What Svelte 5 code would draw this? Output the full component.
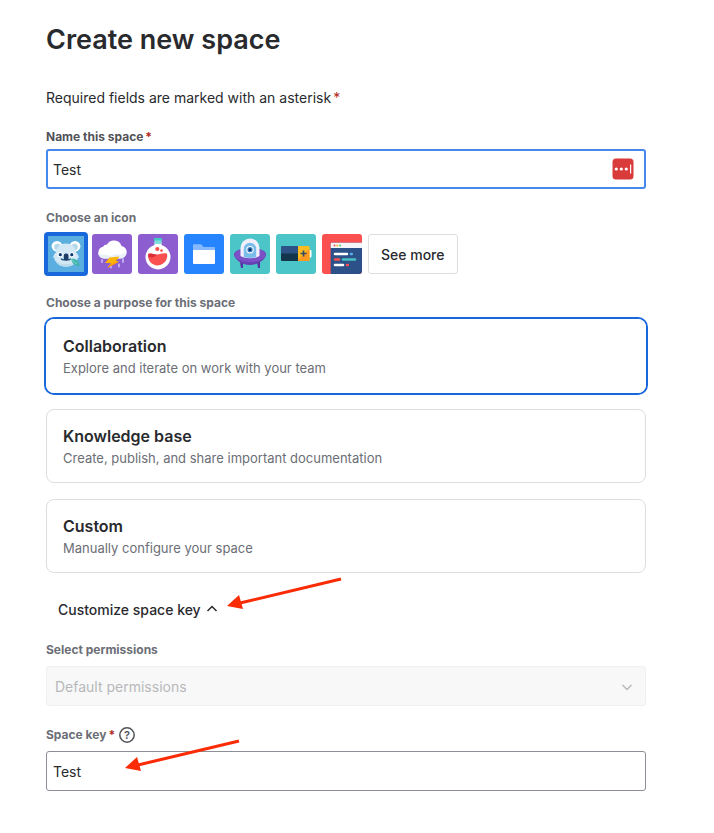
<script>
    const purposes = [
        { id: "collaboration", title: "Collaboration", text: "Explore and iterate on work with your team" },
        { id: "knowledge", title: "Knowledge base", text: "Create, publish, and share important documentation" },
        { id: "custom", title: "Custom", text: "Manually configure your space" },
    ];
    const icons = ["koala", "storm", "flask", "folder", "ufo", "battery", "code"];

    let name = $state("Test");
    let key = $state("Test");
    let icon = $state("koala");
    let purpose = $state("collaboration");
    let open = $state(true);
</script>

{#snippet arrow()}
    <svg class="arrow" width="120" height="36" viewBox="0 0 120 36" aria-hidden="true">
        <path d="M14 26 L115 2" stroke="#fa2b05" stroke-width="3" />
        <path d="M1 29 L13 18 L17 32 Z" fill="#fa2b05" />
    </svg>
{/snippet}

<main>
    <h1>Create new space</h1>
    <p class="hint">Required fields are marked with an asterisk<span class="star">*</span></p>

    <form onsubmit={(e) => e.preventDefault()}>
        <label class="title dark" for="name">Name this space<span class="star">*</span></label>
        <div class="control">
            <input id="name" class="text active" type="text" bind:value={name} />
            <button class="manager" type="button" aria-label="Fill in">
                <svg width="22" height="22" viewBox="0 0 22 22">
                    <rect x="0.5" y="0.5" width="21" height="21" rx="3.5" fill="#d93a3a" />
                    <circle cx="4.3" cy="11" r="1.6" fill="#fff" />
                    <circle cx="9.3" cy="11" r="1.6" fill="#fff" />
                    <circle cx="14.3" cy="11" r="1.6" fill="#fff" />
                    <rect x="18" y="6.5" width="1.2" height="9" fill="#fff" />
                </svg>
            </button>
        </div>

        <div class="title">Choose an icon</div>
        <div class="icons">
            {#each icons as item}
                <button
                    type="button"
                    class="icon"
                    class:selected={icon === item}
                    aria-label={item}
                    aria-pressed={icon === item}
                    onclick={() => (icon = item)}
                >
                    <svg viewBox="0 0 40 40" width="40" height="40">
                        {#if item === "koala"}
                            <rect width="40" height="40" fill="#5aaee0" />
                            <circle cx="11" cy="12.3" r="5.4" fill="#fff" />
                            <circle cx="29" cy="12.3" r="5.4" fill="#fff" />
                            <circle cx="11.5" cy="13" r="3.3" fill="#b3d8ea" />
                            <circle cx="28.5" cy="13" r="3.3" fill="#b3d8ea" />
                            <path d="M20 9.5c7 0 9.5 4 10 9 2 1.5 2.5 3.5 3 5-1 .3-1.5.5-1.5 1 .2 1-.3 2-1 2.5C28 31 25 32.5 20 32.5S12 31 9.5 27c-.7-.5-1.2-1.5-1-2.5 0-.5-.5-.7-1.5-1 .5-1.5 1-3.5 3-5 .5-5 3-9 10-9z" fill="#d2e9f5" />
                            <path d="M10 26c3 4 6 4 10 4s7 0 10-4c-1 5-5 6.5-10 6.5S11 31 10 26z" fill="#bddded" />
                            <circle cx="14" cy="20.5" r="2.6" fill="#fff" />
                            <circle cx="26" cy="20.5" r="2.6" fill="#fff" />
                            <circle cx="14.3" cy="20.7" r="1.6" fill="#0b3a75" />
                            <circle cx="25.8" cy="20.7" r="1.6" fill="#0b3a75" />
                            <path d="M15 24.8c1.5 1.4 3.5 1.3 5 .8 1.5.5 3.5.6 5-.8" fill="none" stroke="#1a4775" stroke-width="1.2" />
                            <rect x="17.8" y="19.5" width="4.7" height="7" rx="2" fill="#1d3c66" />
                            <path d="M25 25c4-1 8 1 8.5 7-4 0-7.5-2.5-8.5-7z" fill="#3fb5ab" />
                            <path d="M24 24.5l7 5.5" stroke="#7bd4c6" />
                        {:else if item === "storm"}
                            <rect width="40" height="40" fill="#8d5ecf" />
                            <path d="M12 24.5a6 6 0 0 1-1-11.8 5 5 0 0 1 4-2.2A8 8 0 0 1 29.5 12 6.3 6.3 0 0 1 28.5 24.5z" fill="#fff" />
                            <path d="M12 24.5A6 6 0 0 1 6 18c2 3 5 3 8 2.5 3 2 7 1.5 9-.5 4 1.5 8 .5 11-2a6.3 6.3 0 0 1-5.5 6.5z" fill="#e8f1f7" />
                            <path d="M17.5 23.5l10-1-3.5 4.5 3 .5-11.5 6.500 3.500-5h-6z" fill="#ffb400" />
                            <path d="M26 27.500l1 .2-11.500 6.300 2-3z" fill="#ff9215" />
                            <g stroke="#c7b6f1" stroke-width="1.8" stroke-linecap="round">
                                <path d="M10 26v2M31 25v3M27 30.500v2M19 33v.6" />
                            </g>
                        {:else if item === "flask"}
                            <rect width="40" height="40" fill="#8d5ecf" />
                            <path d="M16.500 8h7v3a12.500 12.500 0 1 1-7 0z" fill="#fff" />
                            <path d="M30 20a10.500 10.500 0 0 1-20 5l5 4z" fill="#e3e7f1" />
                            <path d="M10.300 20c3-1.500 6 1 9 .5 3-.3 5-2 9.500-1A9.500 9.500 0 1 1 10.300 20z" fill="#fa5050" />
                            <path d="M10.300 20c3-1.500 5.500.3 8.500.8-2 2.500-6 3.500-8.500 1.700z" fill="#d92f3a" />
                            <circle cx="19.3" cy="15" r="2.1" fill="#fa5050" />
                            <circle cx="23.5" cy="16.6" r="1.3" fill="#fa5050" />
                            <rect x="16" y="4" width="8" height="3" rx="0.8" fill="#44cac4" />
                            <rect x="16.5" y="6.5" width="7" height="3.5" fill="#7ededc" />
                        {:else if item === "folder"}
                            <rect width="40" height="40" fill="#2684ff" />
                            <path d="M9 11.200q0-1 1-1h6.500q1 0 1.500 1l1.500 1.800h10.500q1 0 1 1V18H9z" fill="#85b8ff" />
                            <path d="M9 16h22v13q0 1-1 1H10q-1 0-1-1z" fill="#fff" />
                        {:else if item === "ufo"}
                            <rect width="40" height="40" fill="#4bc5c7" />
                            <path d="M10 28h3v6h-2zM27 28h3v6h-2z" fill="#5433a5" />
                            <path d="M4 20.500C4 12 36 12 36 20.500c0 4-7 10.500-16 10.500S4 24.500 4 20.500z" fill="#6740b4" />
                            <ellipse cx="20" cy="21" rx="15.5" ry="7" fill="#7c50c6" />
                            <path d="M10.500 22V14a9.500 9.500 0 0 1 19 0v8c-5 3-14 3-19 0z" fill="#f1effc" />
                            <path d="M13.800 23V15a6.200 6.200 0 0 1 12.400 0v8c-4 1.200-8.400 1.200-12.400 0z" fill="#7bbdea" />
                            <circle cx="20" cy="15.7" r="3.7" fill="#fff" />
                            <circle cx="20" cy="15.7" r="2.6" fill="#3778c0" />
                            <circle cx="20" cy="15.7" r="1.3" fill="#082b55" />
                        {:else if item === "battery"}
                            <rect width="40" height="40" fill="#4bc5c7" />
                            <path d="M33 16h1.500q1 0 1 1v5.500q0 1-1 1H33z" fill="#fff" />
                            <path d="M5 13q0-1 1-1h16v8H5z" fill="#2d5386" />
                            <path d="M5 19.500h17V27H6q-1 0-1-1z" fill="#12354b" />
                            <path d="M22 12h10.500q1 0 1 1v13q0 1-1 1H22z" fill="#ffbc20" />
                            <path d="M33.500 15v11q0 1-1 1H22v-1.500z" fill="#ff991f" />
                            <path d="M27.500 16.500v6M24.500 19.500h6" stroke="#344c63" stroke-width="1.7" />
                        {:else}
                            <rect width="40" height="40" fill="#fa5050" />
                            <path d="M8.700 40V10q0-1.300 1.300-1.300h30V40z" fill="#2c5088" />
                            <path d="M8.700 14v-4q0-1.300 1.300-1.300h30V14z" fill="#f3f5f9" />
                            <circle cx="12.5" cy="11.6" r="1" fill="#fa5050" />
                            <circle cx="15.3" cy="11.6" r="1" fill="#ffb020" />
                            <circle cx="18.1" cy="11.6" r="1" fill="#5cc983" />
                            <g fill="none" stroke-width="2.6" stroke-linecap="round">
                                <path d="M13 20h12M13 31h8" stroke="#fff" />
                                <path d="M29 20h.8" stroke="#5aaee8" />
                                <path d="M13 25.500h4M25 31h.8" stroke="#fa5050" />
                                <path d="M21 25.500h12" stroke="#45c1c1" />
                            </g>
                        {/if}
                    </svg>
                </button>
            {/each}
            <button class="more" type="button">See more</button>
        </div>

        <div class="title">Choose a purpose for this space</div>
        <div class="cards">
            {#each purposes as item}
                <label class="card" class:selected={purpose === item.id}>
                    <input type="radio" name="purpose" value={item.id} bind:group={purpose} />
                    <span class="card-title">{item.title}</span>
                    <span class="card-text">{item.text}</span>
                </label>
            {/each}
        </div>

        <div class="toggle-row">
            <button class="toggle" type="button" aria-expanded={open} onclick={() => (open = !open)}>
                Customize space key
                <svg width="12" height="12" viewBox="0 0 12 12" class:closed={!open}>
                    <path d="M1.500 8 L6 3.500 L10.500 8" fill="none" stroke="#292a2e" stroke-width="1.5" />
                </svg>
            </button>
            {@render arrow()}
        </div>

        {#if open}
            <label class="title spaced" for="permissions">Select permissions</label>
            <div class="control">
                <select id="permissions" disabled>
                    <option>Default permissions</option>
                </select>
                <svg class="chevron" width="12" height="12" viewBox="0 0 12 12">
                    <path d="M1.500 4 L6 8.500 L10.500 4" fill="none" stroke="#b7b8bb" stroke-width="1.5" />
                </svg>
            </div>

            <div class="title spaced key-title">
                <label for="key">Space key<span class="star">*</span></label>
                <button class="help" type="button" aria-label="Help">
                    <svg width="16" height="16" viewBox="0 0 16 16">
                        <circle cx="8" cy="8" r="7.2" fill="none" stroke="#505258" stroke-width="1.5" />
                        <text x="8" y="12" text-anchor="middle">?</text>
                    </svg>
                </button>
            </div>
            <div class="control key">
                <input id="key" class="text" type="text" bind:value={key} />
                {@render arrow()}
            </div>
        {/if}
    </form>
</main>

<style>
    :global(body) {
        margin: 0;
        background: #fff;
    }

    main,
    button,
    input,
    select {
        font-family: Inter, "Liberation Sans", sans-serif;
        font-size: 14px;
        color: #292a2e;
    }

    main {
        padding: 24px 68px 40px 46px;
        line-height: 20px;
    }

    h1 {
        margin: 0 0 32px;
        font-size: 27px;
        line-height: 32px;
        font-weight: 600;
    }

    .hint {
        margin: 0 0 21px;
    }

    .star {
        margin-left: 2px;
        color: #ae2a19;
    }

    .title {
        display: block;
        margin-bottom: 4px;
        font-size: 12px;
        line-height: 16px;
        font-weight: 700;
        color: #6b6e76;
    }

    .dark {
        color: #505258;
    }

    .spaced {
        margin-bottom: 8px;
    }

    .control {
        position: relative;
        margin-bottom: 21px;
    }

    .text,
    select {
        display: block;
        box-sizing: border-box;
        width: 100%;
        height: 40px;
        padding: 0 6px;
        border: 1px solid #8c8f97;
        border-radius: 3px;
        background: #fff;
        outline: none;
    }

    .active {
        padding: 0 5px;
        border: 2px solid #4688ec;
    }

    button {
        padding: 0;
        border: none;
        background: none;
        cursor: pointer;
    }

    .manager {
        position: absolute;
        top: 9px;
        right: 12px;
        height: 22px;
    }

    .icons {
        display: flex;
        flex-wrap: wrap;
        gap: 6px;
        margin: 8px 0 21px;
    }

    .icon {
        position: relative;
        width: 40px;
        height: 40px;
        border-radius: 3px;
    }

    .icon svg {
        display: block;
        border-radius: 3px;
    }

    .icon.selected::after {
        content: "";
        position: absolute;
        inset: -2px;
        border: 4px solid #1868db;
        border-radius: 4px;
    }

    .more {
        height: 40px;
        padding: 0 12px;
        border: 1px solid #dddee1;
        border-radius: 3px;
        font-weight: 500;
    }

    .cards {
        display: grid;
        gap: 16px;
        margin-top: 8px;
    }

    .card {
        position: relative;
        display: flex;
        flex-direction: column;
        gap: 4px;
        padding: 16px;
        border: 1px solid #dddee1;
        border-radius: 8px;
        cursor: pointer;
    }

    .card.selected {
        border-color: #fff;
        box-shadow: 0 0 0 2px #1868db;
    }

    .card input {
        position: absolute;
        opacity: 0;
    }

    .card-title {
        font-size: 16px;
        font-weight: 600;
    }

    .card-text {
        font-size: 13px;
        line-height: 16px;
        color: #6b6e76;
    }

    .toggle-row {
        position: relative;
        margin: 20px 0 17px;
    }

    .toggle {
        display: flex;
        align-items: center;
        gap: 5px;
        height: 32px;
        padding: 0 12px;
        font-weight: 500;
    }

    .closed {
        transform: rotate(180deg);
    }

    .arrow {
        position: absolute;
        top: -16px;
        left: 180px;
        pointer-events: none;
    }

    .key .arrow {
        top: -12px;
        left: 78px;
    }

    select {
        padding: 0 8px;
        border-color: #f0f0f1;
        background: #f8f8f8;
        color: #b7b8bb;
        appearance: none;
        opacity: 1;
    }

    .chevron {
        position: absolute;
        top: 15px;
        right: 13px;
        pointer-events: none;
    }

    .key-title {
        display: flex;
        align-items: center;
        gap: 4px;
    }

    .help {
        height: 16px;
    }

    .help svg {
        display: block;
        overflow: visible;
    }

    .help text {
        font-size: 11px;
        font-weight: 600;
        fill: #505258;
    }
</style>
